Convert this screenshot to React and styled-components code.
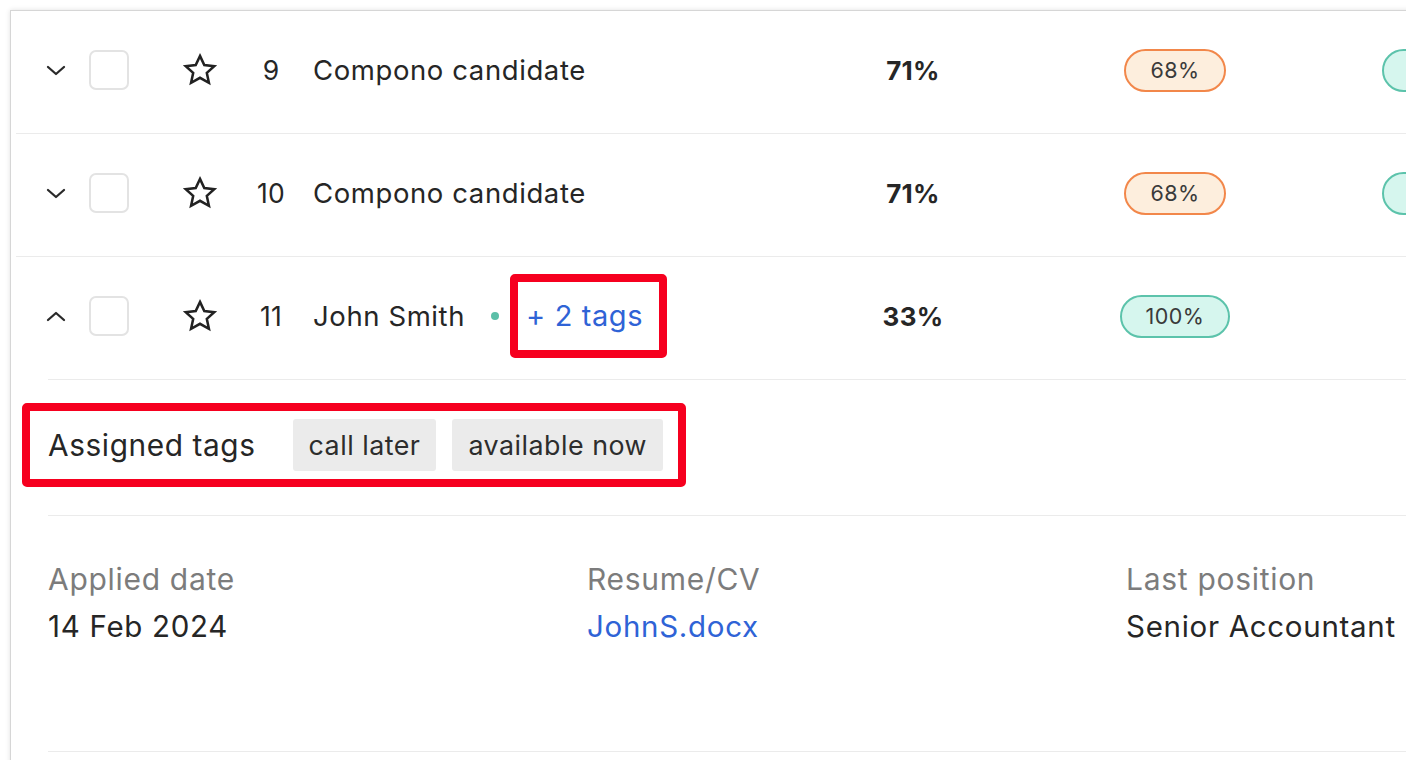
import React from 'react';
import styled, { createGlobalStyle } from 'styled-components';

const GlobalStyle = createGlobalStyle`
    html, body {
        margin: 0;
        padding: 0;
        background: #ffffff;
        overflow: hidden;
    }
    body {
        font-family: Inter, "Liberation Sans", sans-serif;
        color: #262626;
    }
`;

const Page = styled.div`
    padding: 10px 0 0 10px;
    height: 760px;
    box-sizing: border-box;
`;

const Card = styled.div`
    width: 1520px;
    height: 800px;
    background: #ffffff;
    border-top: 1px solid #d6d6d6;
    border-left: 1px solid #d6d6d6;
    box-shadow: 0 0 5px rgba(0, 0, 0, 0.12);
`;

const Row = styled.div`
    display: flex;
    align-items: center;
    height: 123px;
    padding-bottom: 4px;
    box-sizing: border-box;
    margin-left: ${p => (p.$open ? '37px' : '5px')};
    padding-left: ${p => (p.$open ? '0' : '20px')};
    border-bottom: 1px solid #ebebeb;
    & > :first-child {
        margin-left: ${p => (p.$open ? '-12px' : '0')};
    }
`;

const Toggle = styled.div`
    width: 40px;
    display: flex;
    justify-content: center;
    align-items: center;
`;

const CheckCell = styled.div`
    width: 66px;
    display: flex;
    justify-content: center;
`;

const Checkbox = styled.div`
    width: 40px;
    height: 40px;
    box-sizing: border-box;
    border: 2px solid #e3e3e3;
    border-radius: 7px;
`;

const StarCell = styled.div`
    width: 116px;
    display: flex;
    justify-content: center;
    align-items: center;
`;

const IndexCell = styled.div`
    width: 26px;
    display: flex;
    justify-content: center;
    font-size: 26.5px;
    letter-spacing: 0.2px;
`;

const NameCell = styled.div`
    width: 569px;
    box-sizing: border-box;
    padding-left: 29px;
    display: flex;
    align-items: center;
    font-size: 27.5px;
    letter-spacing: 0.6px;
    white-space: nowrap;
`;

const StatusDot = styled.span`
    width: 8px;
    height: 8px;
    border-radius: 50%;
    background: #5bbfa8;
    margin-left: 26px;
    margin-right: 11px;
    flex-shrink: 0;
`;

const Highlight = styled.div`
    display: inline-flex;
    align-items: center;
    gap: 16px;
    border: 8px solid #f6001f;
    border-radius: 5px;
    padding: ${p => p.$pad};
    margin-left: ${p => p.$shift || '0'};
`;

const TagsLink = styled.a`
    color: #2f63d6;
    font-size: 29px;
    letter-spacing: 0.6px;
    text-decoration: none;
    line-height: 68px;
`;

const ScoreCell = styled.div`
    width: 120px;
    display: flex;
    justify-content: center;
    font-size: 26px;
    font-weight: 700;
    letter-spacing: 0.3px;
`;

const PillCell = styled.div`
    width: 120px;
    margin-left: ${p => p.$gap};
    display: flex;
    justify-content: ${p => (p.$start ? 'flex-start' : 'center')};
`;

const Pill = styled.span`
    display: inline-flex;
    align-items: center;
    justify-content: center;
    height: 43px;
    min-width: ${p => p.$w || '102px'};
    box-sizing: border-box;
    padding: 0 16px;
    border-radius: 22px;
    font-size: 21.5px;
    letter-spacing: 0.5px;
    color: #3a3a3a;
    border: 2px solid ${p => (p.$tone === 'orange' ? '#f2874a' : '#5cc3ab')};
    background: ${p => (p.$tone === 'orange' ? '#fdeedd' : '#d6f6ee')};
`;

const Expanded = styled.div`
    margin-left: 37px;
`;

const TagsRow = styled.div`
    height: 136px;
    box-sizing: border-box;
    padding-bottom: 5px;
    display: flex;
    align-items: center;
    border-bottom: 1px solid #ebebeb;
`;

const TagsLabel = styled.span`
    font-size: 29.8px;
    letter-spacing: 0.6px;
    color: #262626;
    margin-right: 21px;
`;

const Chip = styled.span`
    display: inline-flex;
    align-items: center;
    height: 52px;
    padding: 0 16px;
    background: #ebebeb;
    border-radius: 3px;
    font-size: 26.8px;
    letter-spacing: 0.5px;
    color: #2d2d2d;
`;

const Details = styled.div`
    height: 236px;
    box-sizing: border-box;
    padding-top: 47px;
    display: grid;
    grid-template-columns: 539px 539px 539px;
    align-content: start;
    border-bottom: 1px solid #ebebeb;
`;

const Field = styled.div`
    display: flex;
    flex-direction: column;
    gap: 14px;
`;

const FieldLabel = styled.span`
    font-size: 30px;
    letter-spacing: 0.7px;
    color: #7c7c7c;
    line-height: 33px;
`;

const FieldValue = styled.span`
    font-size: 29.5px;
    letter-spacing: 0.7px;
    line-height: 33px;
    color: ${p => (p.$link ? '#2f63d6' : '#262626')};
`;

const Chevron = ({ up }) => (
    <svg width="24" height="14" viewBox="0 0 24 14" fill="none">
        <path
            d={up ? 'M4 11 L12 4 L20 11' : 'M4 4 L12 11 L20 4'}
            stroke="#2a2a2a"
            strokeWidth="2.3"
            strokeLinecap="round"
            strokeLinejoin="round"
        />
    </svg>
);

const StarIcon = () => (
    <svg width="36" height="36" viewBox="0 0 24 24" fill="none">
        <path
            d="M12 2.6l2.85 6.1 6.65.75-4.95 4.5 1.4 6.6L12 17.2l-5.95 3.35 1.4-6.6-4.95-4.5 6.65-.75z"
            stroke="#222"
            strokeWidth="1.7"
            strokeLinejoin="miter"
        />
    </svg>
);

const rows = [
    { id: 9, name: 'Compono candidate', score: '71%', fit: '68%' },
    { id: 10, name: 'Compono candidate', score: '71%', fit: '68%' },
];

const CandidateRow = ({ id, name, score, fit }) => (
    <Row>
        <Toggle><Chevron /></Toggle>
        <CheckCell><Checkbox /></CheckCell>
        <StarCell><StarIcon /></StarCell>
        <IndexCell>{id}</IndexCell>
        <NameCell>{name}</NameCell>
        <ScoreCell>{score}</ScoreCell>
        <PillCell $gap="142px"><Pill $tone="orange">{fit}</Pill></PillCell>
        <PillCell $gap="147px" $start><Pill $tone="teal" $w="110px">100%</Pill></PillCell>
    </Row>
);

const App = () => (
    <Page>
        <GlobalStyle />
        <Card>
            {rows.map(r => <CandidateRow key={r.id} {...r} />)}
            <Row $open>
                <Toggle><Chevron up /></Toggle>
                <CheckCell><Checkbox /></CheckCell>
                <StarCell><StarIcon /></StarCell>
                <IndexCell>11</IndexCell>
                <NameCell>
                    John Smith
                    <StatusDot />
                    <Highlight $pad="0 16px 0 8px">
                        <TagsLink href="#">+ 2 tags</TagsLink>
                    </Highlight>
                </NameCell>
                <ScoreCell>33%</ScoreCell>
                <PillCell $gap="142px"><Pill $tone="teal" $w="110px">100%</Pill></PillCell>
            </Row>
            <Expanded>
                <TagsRow>
                    <Highlight $pad="8px 15px 8px 18px" $shift="-26px">
                        <TagsLabel>Assigned tags</TagsLabel>
                        <Chip>call later</Chip>
                        <Chip>available now</Chip>
                    </Highlight>
                </TagsRow>
                <Details>
                    <Field>
                        <FieldLabel>Applied date</FieldLabel>
                        <FieldValue>14 Feb 2024</FieldValue>
                    </Field>
                    <Field>
                        <FieldLabel>Resume/CV</FieldLabel>
                        <FieldValue $link>JohnS.docx</FieldValue>
                    </Field>
                    <Field>
                        <FieldLabel>Last position</FieldLabel>
                        <FieldValue>Senior Accountant</FieldValue>
                    </Field>
                </Details>
            </Expanded>
        </Card>
    </Page>
);

export default App;
